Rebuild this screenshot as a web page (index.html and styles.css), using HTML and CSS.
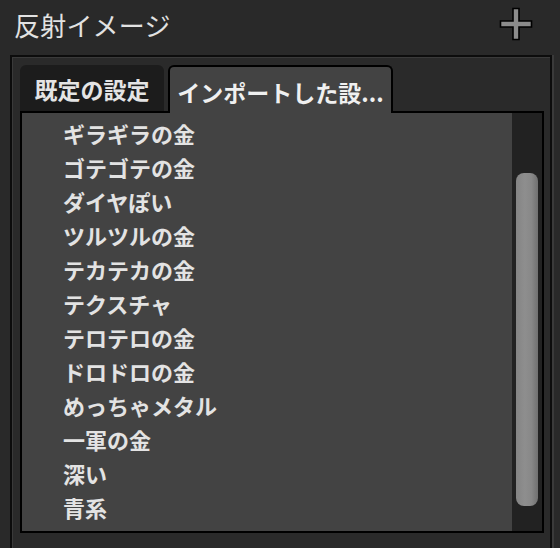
FILE: index.html
```html
<!DOCTYPE html>
<html lang="ja">
<head>
<meta charset="utf-8">
<link rel="stylesheet" href="styles.css">
</head>
<body>
<div class="panel">
  <header class="header">
    <h1 class="title">反射イメージ</h1>
    <svg class="add" width="34" height="34" viewBox="0 0 34 34">
      <path d="M14 1.5 H20 V14 H32.5 V20 H20 V32.5 H14 V20 H1.5 V14 H14 Z" fill="#8b8b8b" stroke="#000" stroke-width="1.6" stroke-linejoin="miter"/>
    </svg>
  </header>
  <section class="group">
    <div class="tabs">
      <div class="tab">既定の設定</div>
      <div class="tab active">インポートした設...</div>
    </div>
    <div class="content">
      <ul class="list">
        <li class="item">ギラギラの金</li>
        <li class="item">ゴテゴテの金</li>
        <li class="item">ダイヤぽい</li>
        <li class="item">ツルツルの金</li>
        <li class="item">テカテカの金</li>
        <li class="item">テクスチャ</li>
        <li class="item">テロテロの金</li>
        <li class="item">ドロドロの金</li>
        <li class="item">めっちゃメタル</li>
        <li class="item">一軍の金</li>
        <li class="item">深い</li>
        <li class="item">青系</li>
        <li class="item">渓谷の王紀</li>
      </ul>
      <div class="track"><div class="thumb"></div></div>
    </div>
  </section>
</div>
</body>
</html>
```

FILE: styles.css
```css
html, body {
  margin: 0;
  padding: 0;
  background: #292929;
  overflow: hidden;
}
body {
  width: 560px;
  height: 548px;
  font-family: "Noto Sans CJK JP", "Noto Sans", sans-serif;
  color: #e4e4e4;
}
.panel {
  display: flex;
  flex-direction: column;
  height: 548px;
}
.header {
  height: 58px;
  display: flex;
  align-items: flex-start;
  justify-content: space-between;
  padding: 0 27px 0 14px;
  box-sizing: border-box;
}
.title {
  margin: 8px 0 0 0;
  font-size: 26px;
  font-weight: 400;
  line-height: 34px;
  color: #e2e2e2;
  letter-spacing: 0.2px;
}
.add {
  margin-top: 7px;
  display: block;
}
.group {
  margin-left: 10px;
  width: 542px;
  height: 520px;
  box-sizing: border-box;
  border: 2px solid #0c0c0c;
  border-bottom: none;
  box-shadow: inset 1px 1px 0 #3a3a3a, 2px 0 0 #3a3a3a;
  padding: 8px 6px 0 8px;
  background: #2a2a2a;
  display: flex;
  flex-direction: column;
}
.tabs {
  display: flex;
  gap: 4px;
  height: 46px;
  position: relative;
  z-index: 1;
}
.tab {
  width: 144px;
  box-sizing: border-box;
  background: #1c1c1c;
  border-radius: 6px 6px 0 0;
  font-size: 23px;
  font-weight: 700;
  color: #e4e4e4;
  display: flex;
  align-items: center;
  justify-content: center;
  padding-top: 2px;
}
.tab.active {
  width: 225px;
  background: #434343;
  border: 2px solid #000;
  border-bottom: none;
  height: 48px;
  color: #f0f0f0;
  padding-top: 4px;
}
.content {
  width: 524px;
  height: 422px;
  box-sizing: border-box;
  border: 2px solid #000;
  background: #434343;
  display: flex;
}
.list {
  list-style: none;
  margin: 0;
  padding: 3px 0 0 41px;
  flex: 1;
  overflow: hidden;
}
.item {
  height: 34px;
  line-height: 34px;
  font-size: 22px;
  font-weight: 700;
  color: #e3e3e3;
  white-space: nowrap;
}
.track {
  width: 30px;
  background: #222222;
  display: flex;
  flex-direction: column;
  align-items: center;
}
.thumb {
  margin-top: 60px;
  width: 22px;
  height: 333px;
  border-radius: 8px;
  background: linear-gradient(to right, #848484 0%, #8e8e8e 40%, #888888 70%, #707070 100%);
}
```
